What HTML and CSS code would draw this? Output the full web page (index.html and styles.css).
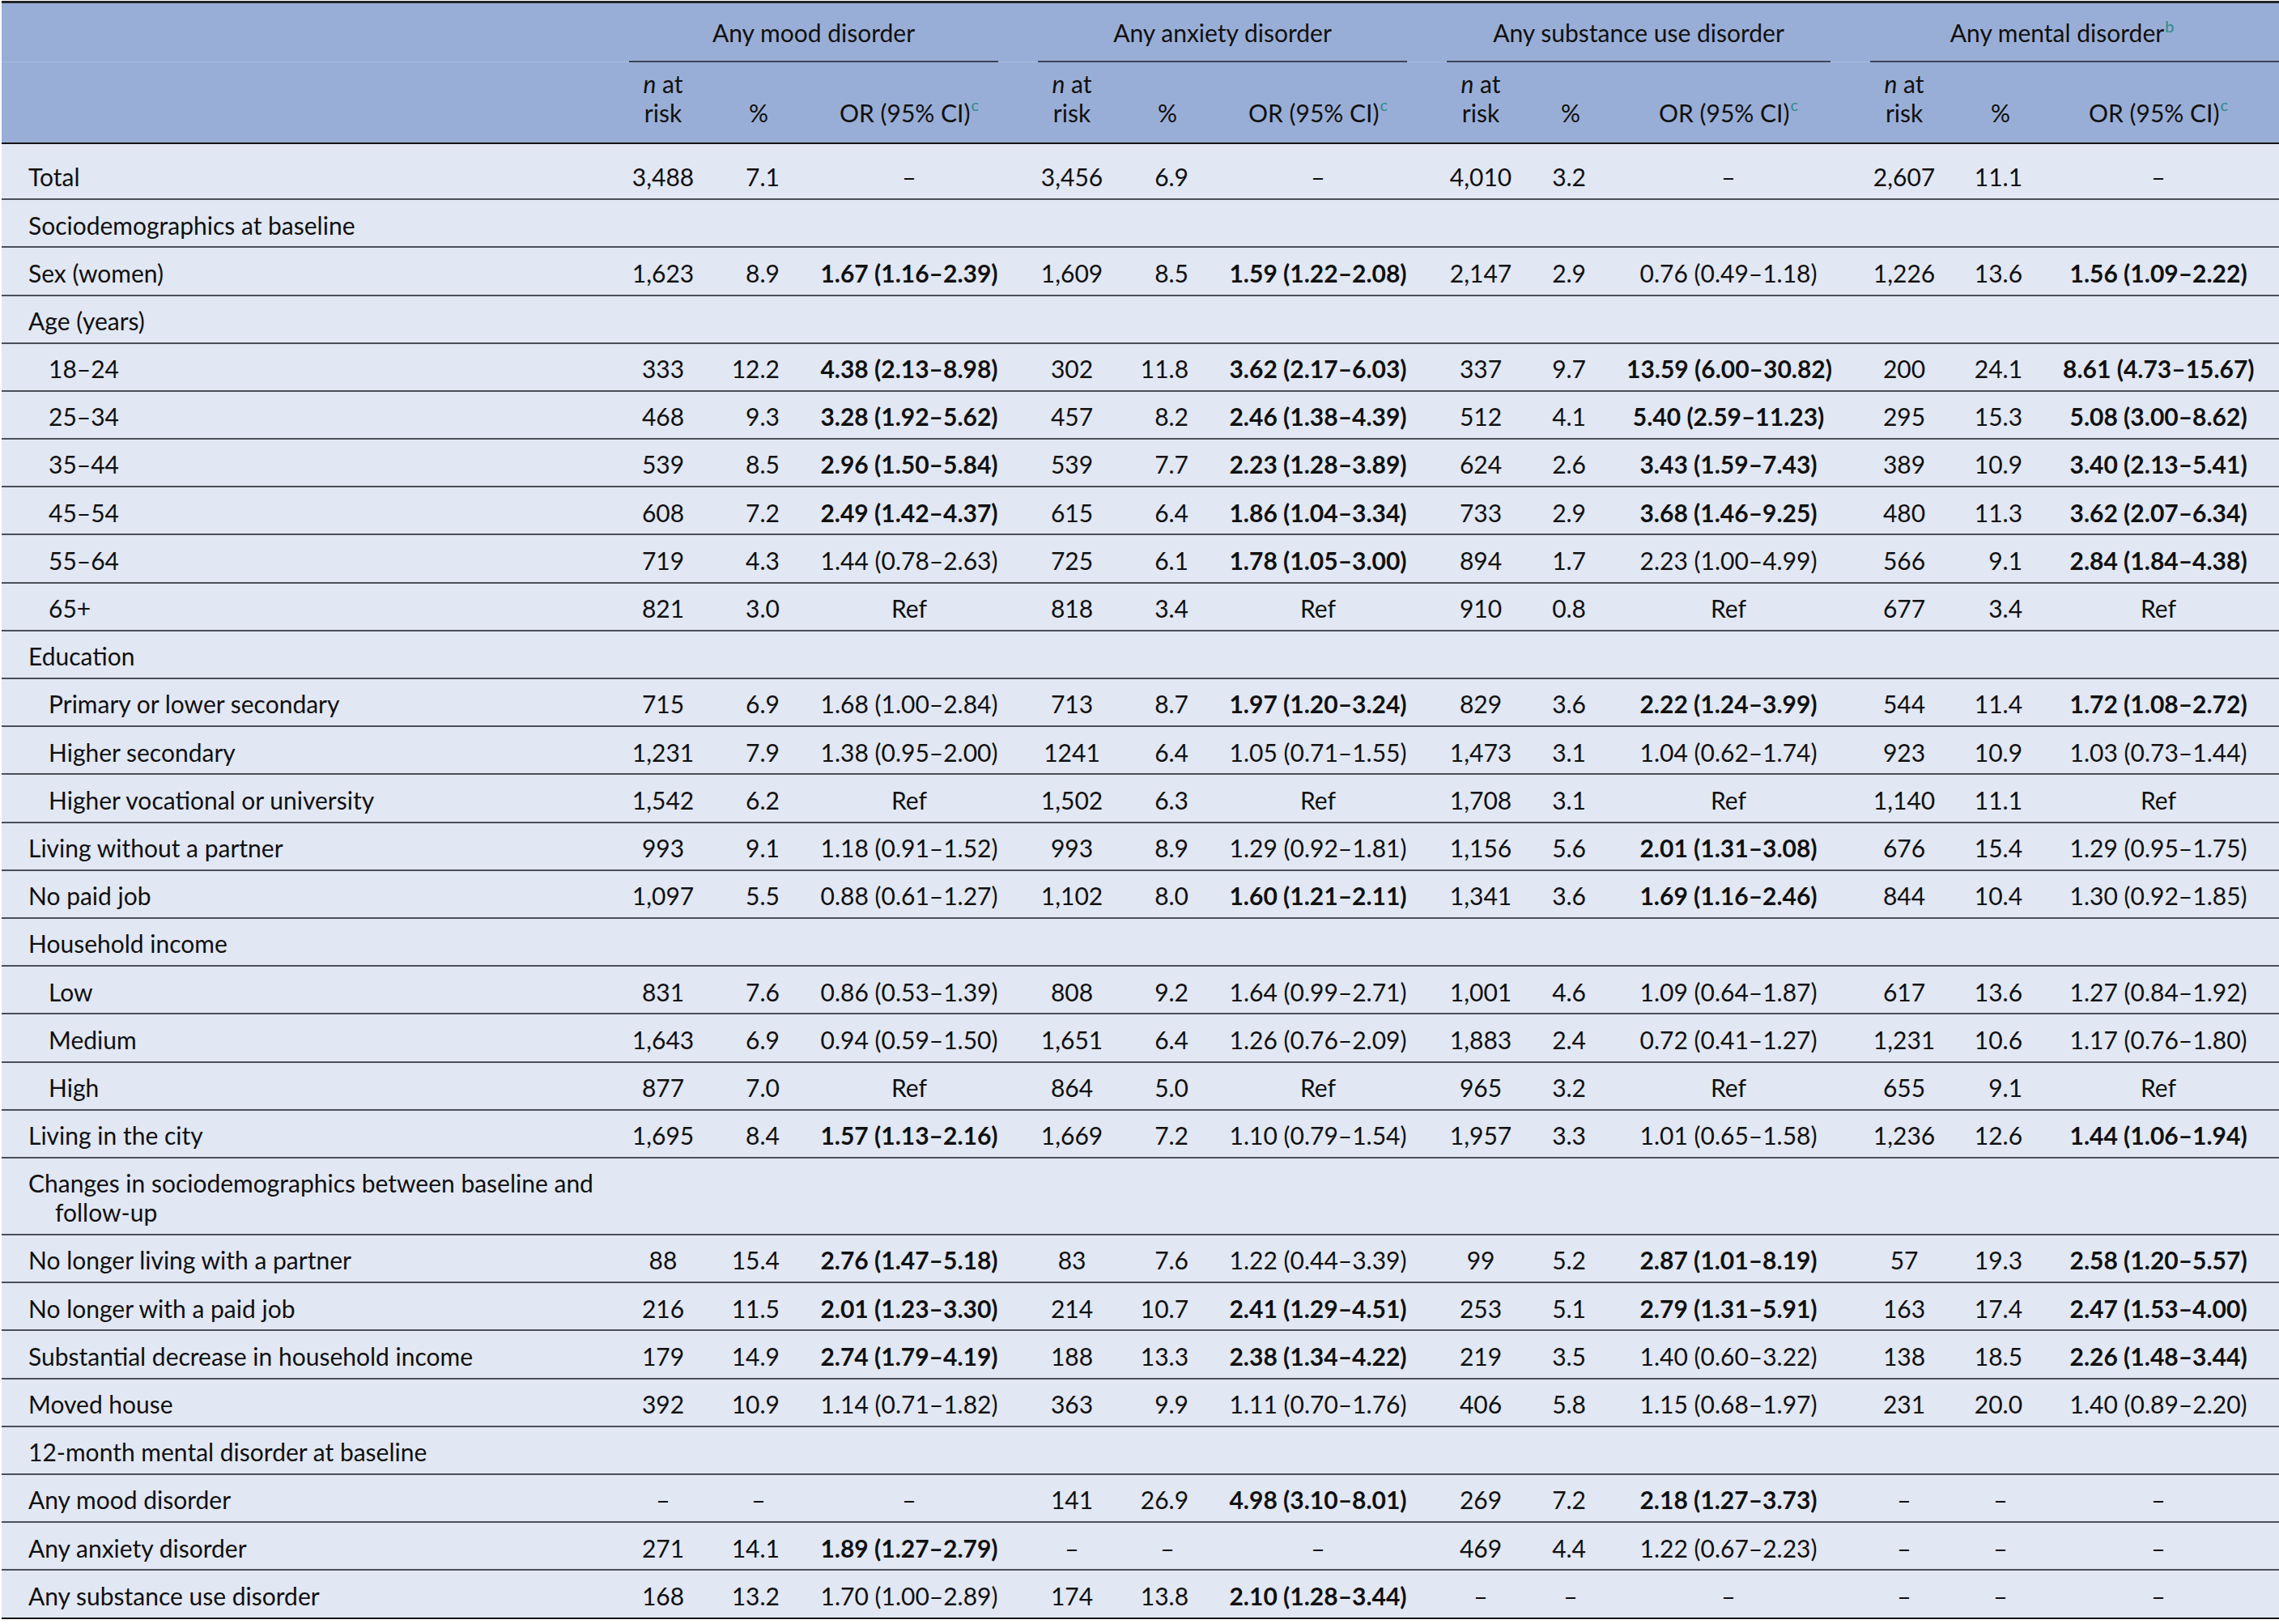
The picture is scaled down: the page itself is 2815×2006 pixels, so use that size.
FILE: index.html
```html
<!DOCTYPE html>
<html lang="en">
<head>
<meta charset="utf-8">
<title>Table</title>
<link rel="stylesheet" href="styles.css">
</head>
<body>
<table class="tbl">
  <colgroup>
    <col class="w-lab">
    <col class="w-n"><col class="w-pc"><col class="w-or"><col class="w-sp">
    <col class="w-n"><col class="w-pc"><col class="w-or"><col class="w-sp">
    <col class="w-n"><col class="w-pc3"><col class="w-or3"><col class="w-sp">
    <col class="w-n"><col class="w-pc4"><col class="w-or4">
  </colgroup>
  <thead>
    <tr class="hr1">
      <th class="blank"></th>
      <th class="grp" colspan="3">Any mood disorder</th>
      <th class="blank"></th>
      <th class="grp" colspan="3">Any anxiety disorder</th>
      <th class="blank"></th>
      <th class="grp" colspan="3">Any substance use disorder</th>
      <th class="blank"></th>
      <th class="grp last" colspan="3">Any mental disorder<sup>b</sup></th>
    </tr>
    <tr class="hr2">
      <th></th>
      <th class="n"><i>n</i> at<br>risk</th><th class="pch">%</th><th class="or">OR (95% CI)<sup>c</sup></th><th></th>
      <th class="n"><i>n</i> at<br>risk</th><th class="pch">%</th><th class="or">OR (95% CI)<sup>c</sup></th><th></th>
      <th class="n"><i>n</i> at<br>risk</th><th class="pch">%</th><th class="or">OR (95% CI)<sup>c</sup></th><th></th>
      <th class="n"><i>n</i> at<br>risk</th><th class="pch">%</th><th class="or last">OR (95% CI)<sup>c</sup></th>
    </tr>
  </thead>
  <tbody>
    <tr class="first">
      <td class="lab">Total</td>
      <td class="n">3,488</td><td class="pc">7.1</td><td class="or">–</td><td></td>
      <td class="n">3,456</td><td class="pc">6.9</td><td class="or">–</td><td></td>
      <td class="n">4,010</td><td class="pc">3.2</td><td class="or">–</td><td></td>
      <td class="n">2,607</td><td class="pc">11.1</td><td class="or last">–</td>
    </tr>
    <tr class="sec">
      <td class="lab">Sociodemographics at baseline</td><td colspan="15"></td>
    </tr>
    <tr>
      <td class="lab">Sex (women)</td>
      <td class="n">1,623</td><td class="pc">8.9</td><td class="or"><b>1.67 (1.16–2.39)</b></td><td></td>
      <td class="n">1,609</td><td class="pc">8.5</td><td class="or"><b>1.59 (1.22–2.08)</b></td><td></td>
      <td class="n">2,147</td><td class="pc">2.9</td><td class="or">0.76 (0.49–1.18)</td><td></td>
      <td class="n">1,226</td><td class="pc">13.6</td><td class="or last"><b>1.56 (1.09–2.22)</b></td>
    </tr>
    <tr class="sec">
      <td class="lab">Age (years)</td><td colspan="15"></td>
    </tr>
    <tr>
      <td class="lab ind">18–24</td>
      <td class="n">333</td><td class="pc">12.2</td><td class="or"><b>4.38 (2.13–8.98)</b></td><td></td>
      <td class="n">302</td><td class="pc">11.8</td><td class="or"><b>3.62 (2.17–6.03)</b></td><td></td>
      <td class="n">337</td><td class="pc">9.7</td><td class="or"><b>13.59 (6.00–30.82)</b></td><td></td>
      <td class="n">200</td><td class="pc">24.1</td><td class="or last"><b>8.61 (4.73–15.67)</b></td>
    </tr>
    <tr>
      <td class="lab ind">25–34</td>
      <td class="n">468</td><td class="pc">9.3</td><td class="or"><b>3.28 (1.92–5.62)</b></td><td></td>
      <td class="n">457</td><td class="pc">8.2</td><td class="or"><b>2.46 (1.38–4.39)</b></td><td></td>
      <td class="n">512</td><td class="pc">4.1</td><td class="or"><b>5.40 (2.59–11.23)</b></td><td></td>
      <td class="n">295</td><td class="pc">15.3</td><td class="or last"><b>5.08 (3.00–8.62)</b></td>
    </tr>
    <tr>
      <td class="lab ind">35–44</td>
      <td class="n">539</td><td class="pc">8.5</td><td class="or"><b>2.96 (1.50–5.84)</b></td><td></td>
      <td class="n">539</td><td class="pc">7.7</td><td class="or"><b>2.23 (1.28–3.89)</b></td><td></td>
      <td class="n">624</td><td class="pc">2.6</td><td class="or"><b>3.43 (1.59–7.43)</b></td><td></td>
      <td class="n">389</td><td class="pc">10.9</td><td class="or last"><b>3.40 (2.13–5.41)</b></td>
    </tr>
    <tr>
      <td class="lab ind">45–54</td>
      <td class="n">608</td><td class="pc">7.2</td><td class="or"><b>2.49 (1.42–4.37)</b></td><td></td>
      <td class="n">615</td><td class="pc">6.4</td><td class="or"><b>1.86 (1.04–3.34)</b></td><td></td>
      <td class="n">733</td><td class="pc">2.9</td><td class="or"><b>3.68 (1.46–9.25)</b></td><td></td>
      <td class="n">480</td><td class="pc">11.3</td><td class="or last"><b>3.62 (2.07–6.34)</b></td>
    </tr>
    <tr>
      <td class="lab ind">55–64</td>
      <td class="n">719</td><td class="pc">4.3</td><td class="or">1.44 (0.78–2.63)</td><td></td>
      <td class="n">725</td><td class="pc">6.1</td><td class="or"><b>1.78 (1.05–3.00)</b></td><td></td>
      <td class="n">894</td><td class="pc">1.7</td><td class="or">2.23 (1.00–4.99)</td><td></td>
      <td class="n">566</td><td class="pc">9.1</td><td class="or last"><b>2.84 (1.84–4.38)</b></td>
    </tr>
    <tr>
      <td class="lab ind">65+</td>
      <td class="n">821</td><td class="pc">3.0</td><td class="or">Ref</td><td></td>
      <td class="n">818</td><td class="pc">3.4</td><td class="or">Ref</td><td></td>
      <td class="n">910</td><td class="pc">0.8</td><td class="or">Ref</td><td></td>
      <td class="n">677</td><td class="pc">3.4</td><td class="or last">Ref</td>
    </tr>
    <tr class="sec">
      <td class="lab">Education</td><td colspan="15"></td>
    </tr>
    <tr>
      <td class="lab ind">Primary or lower secondary</td>
      <td class="n">715</td><td class="pc">6.9</td><td class="or">1.68 (1.00–2.84)</td><td></td>
      <td class="n">713</td><td class="pc">8.7</td><td class="or"><b>1.97 (1.20–3.24)</b></td><td></td>
      <td class="n">829</td><td class="pc">3.6</td><td class="or"><b>2.22 (1.24–3.99)</b></td><td></td>
      <td class="n">544</td><td class="pc">11.4</td><td class="or last"><b>1.72 (1.08–2.72)</b></td>
    </tr>
    <tr>
      <td class="lab ind">Higher secondary</td>
      <td class="n">1,231</td><td class="pc">7.9</td><td class="or">1.38 (0.95–2.00)</td><td></td>
      <td class="n">1241</td><td class="pc">6.4</td><td class="or">1.05 (0.71–1.55)</td><td></td>
      <td class="n">1,473</td><td class="pc">3.1</td><td class="or">1.04 (0.62–1.74)</td><td></td>
      <td class="n">923</td><td class="pc">10.9</td><td class="or last">1.03 (0.73–1.44)</td>
    </tr>
    <tr>
      <td class="lab ind">Higher vocational or university</td>
      <td class="n">1,542</td><td class="pc">6.2</td><td class="or">Ref</td><td></td>
      <td class="n">1,502</td><td class="pc">6.3</td><td class="or">Ref</td><td></td>
      <td class="n">1,708</td><td class="pc">3.1</td><td class="or">Ref</td><td></td>
      <td class="n">1,140</td><td class="pc">11.1</td><td class="or last">Ref</td>
    </tr>
    <tr>
      <td class="lab">Living without a partner</td>
      <td class="n">993</td><td class="pc">9.1</td><td class="or">1.18 (0.91–1.52)</td><td></td>
      <td class="n">993</td><td class="pc">8.9</td><td class="or">1.29 (0.92–1.81)</td><td></td>
      <td class="n">1,156</td><td class="pc">5.6</td><td class="or"><b>2.01 (1.31–3.08)</b></td><td></td>
      <td class="n">676</td><td class="pc">15.4</td><td class="or last">1.29 (0.95–1.75)</td>
    </tr>
    <tr>
      <td class="lab">No paid job</td>
      <td class="n">1,097</td><td class="pc">5.5</td><td class="or">0.88 (0.61–1.27)</td><td></td>
      <td class="n">1,102</td><td class="pc">8.0</td><td class="or"><b>1.60 (1.21–2.11)</b></td><td></td>
      <td class="n">1,341</td><td class="pc">3.6</td><td class="or"><b>1.69 (1.16–2.46)</b></td><td></td>
      <td class="n">844</td><td class="pc">10.4</td><td class="or last">1.30 (0.92–1.85)</td>
    </tr>
    <tr class="sec">
      <td class="lab">Household income</td><td colspan="15"></td>
    </tr>
    <tr>
      <td class="lab ind">Low</td>
      <td class="n">831</td><td class="pc">7.6</td><td class="or">0.86 (0.53–1.39)</td><td></td>
      <td class="n">808</td><td class="pc">9.2</td><td class="or">1.64 (0.99–2.71)</td><td></td>
      <td class="n">1,001</td><td class="pc">4.6</td><td class="or">1.09 (0.64–1.87)</td><td></td>
      <td class="n">617</td><td class="pc">13.6</td><td class="or last">1.27 (0.84–1.92)</td>
    </tr>
    <tr>
      <td class="lab ind">Medium</td>
      <td class="n">1,643</td><td class="pc">6.9</td><td class="or">0.94 (0.59–1.50)</td><td></td>
      <td class="n">1,651</td><td class="pc">6.4</td><td class="or">1.26 (0.76–2.09)</td><td></td>
      <td class="n">1,883</td><td class="pc">2.4</td><td class="or">0.72 (0.41–1.27)</td><td></td>
      <td class="n">1,231</td><td class="pc">10.6</td><td class="or last">1.17 (0.76–1.80)</td>
    </tr>
    <tr>
      <td class="lab ind">High</td>
      <td class="n">877</td><td class="pc">7.0</td><td class="or">Ref</td><td></td>
      <td class="n">864</td><td class="pc">5.0</td><td class="or">Ref</td><td></td>
      <td class="n">965</td><td class="pc">3.2</td><td class="or">Ref</td><td></td>
      <td class="n">655</td><td class="pc">9.1</td><td class="or last">Ref</td>
    </tr>
    <tr>
      <td class="lab">Living in the city</td>
      <td class="n">1,695</td><td class="pc">8.4</td><td class="or"><b>1.57 (1.13–2.16)</b></td><td></td>
      <td class="n">1,669</td><td class="pc">7.2</td><td class="or">1.10 (0.79–1.54)</td><td></td>
      <td class="n">1,957</td><td class="pc">3.3</td><td class="or">1.01 (0.65–1.58)</td><td></td>
      <td class="n">1,236</td><td class="pc">12.6</td><td class="or last"><b>1.44 (1.06–1.94)</b></td>
    </tr>
    <tr class="sec">
      <td class="lab hang">Changes in sociodemographics between baseline and<br>follow-up</td><td colspan="15"></td>
    </tr>
    <tr>
      <td class="lab">No longer living with a partner</td>
      <td class="n">88</td><td class="pc">15.4</td><td class="or"><b>2.76 (1.47–5.18)</b></td><td></td>
      <td class="n">83</td><td class="pc">7.6</td><td class="or">1.22 (0.44–3.39)</td><td></td>
      <td class="n">99</td><td class="pc">5.2</td><td class="or"><b>2.87 (1.01–8.19)</b></td><td></td>
      <td class="n">57</td><td class="pc">19.3</td><td class="or last"><b>2.58 (1.20–5.57)</b></td>
    </tr>
    <tr>
      <td class="lab">No longer with a paid job</td>
      <td class="n">216</td><td class="pc">11.5</td><td class="or"><b>2.01 (1.23–3.30)</b></td><td></td>
      <td class="n">214</td><td class="pc">10.7</td><td class="or"><b>2.41 (1.29–4.51)</b></td><td></td>
      <td class="n">253</td><td class="pc">5.1</td><td class="or"><b>2.79 (1.31–5.91)</b></td><td></td>
      <td class="n">163</td><td class="pc">17.4</td><td class="or last"><b>2.47 (1.53–4.00)</b></td>
    </tr>
    <tr>
      <td class="lab">Substantial decrease in household income</td>
      <td class="n">179</td><td class="pc">14.9</td><td class="or"><b>2.74 (1.79–4.19)</b></td><td></td>
      <td class="n">188</td><td class="pc">13.3</td><td class="or"><b>2.38 (1.34–4.22)</b></td><td></td>
      <td class="n">219</td><td class="pc">3.5</td><td class="or">1.40 (0.60–3.22)</td><td></td>
      <td class="n">138</td><td class="pc">18.5</td><td class="or last"><b>2.26 (1.48–3.44)</b></td>
    </tr>
    <tr>
      <td class="lab">Moved house</td>
      <td class="n">392</td><td class="pc">10.9</td><td class="or">1.14 (0.71–1.82)</td><td></td>
      <td class="n">363</td><td class="pc">9.9</td><td class="or">1.11 (0.70–1.76)</td><td></td>
      <td class="n">406</td><td class="pc">5.8</td><td class="or">1.15 (0.68–1.97)</td><td></td>
      <td class="n">231</td><td class="pc">20.0</td><td class="or last">1.40 (0.89–2.20)</td>
    </tr>
    <tr class="sec">
      <td class="lab">12-month mental disorder at baseline</td><td colspan="15"></td>
    </tr>
    <tr>
      <td class="lab">Any mood disorder</td>
      <td class="n">–</td><td class="pc dash">–</td><td class="or">–</td><td></td>
      <td class="n">141</td><td class="pc">26.9</td><td class="or"><b>4.98 (3.10–8.01)</b></td><td></td>
      <td class="n">269</td><td class="pc">7.2</td><td class="or"><b>2.18 (1.27–3.73)</b></td><td></td>
      <td class="n">–</td><td class="pc dash">–</td><td class="or last">–</td>
    </tr>
    <tr>
      <td class="lab">Any anxiety disorder</td>
      <td class="n">271</td><td class="pc">14.1</td><td class="or"><b>1.89 (1.27–2.79)</b></td><td></td>
      <td class="n">–</td><td class="pc dash">–</td><td class="or">–</td><td></td>
      <td class="n">469</td><td class="pc">4.4</td><td class="or">1.22 (0.67–2.23)</td><td></td>
      <td class="n">–</td><td class="pc dash">–</td><td class="or last">–</td>
    </tr>
    <tr class="final">
      <td class="lab">Any substance use disorder</td>
      <td class="n">168</td><td class="pc">13.2</td><td class="or">1.70 (1.00–2.89)</td><td></td>
      <td class="n">174</td><td class="pc">13.8</td><td class="or"><b>2.10 (1.28–3.44)</b></td><td></td>
      <td class="n">–</td><td class="pc dash">–</td><td class="or">–</td><td></td>
      <td class="n">–</td><td class="pc dash">–</td><td class="or last">–</td>
    </tr>
  </tbody>
</table>
</body>
</html>
```

FILE: styles.css
```css
* {
  box-sizing: border-box;
}

html,
body {
  margin: 0;
  background: #ffffff;
}

body {
  padding: 1px 0 0 2px;
  font-family: "Lato", "Open Sans", "Liberation Sans", sans-serif;
  font-size: 30px;
  line-height: 36px;
  color: #101010;
}

.tbl {
  width: 2813px;
  table-layout: fixed;
  border-collapse: separate;
  border-spacing: 0;
  border-top: 3px solid #222326;
}

.w-lab { width: 775px; }
.w-n { width: 84px; }
.w-pc { width: 152px; }
.w-pc3 { width: 138px; }
.w-pc4 { width: 154px; }
.w-or { width: 220px; }
.w-or3 { width: 252px; }
.w-or4 { width: 267px; }
.w-sp { width: 49px; }

th,
td {
  padding: 0;
  font-weight: 400;
  white-space: nowrap;
}

thead th {
  background: #99aed6;
}

tbody td {
  background: #e1e7f3;
}

/* header row 1: group titles */
.hr1 th {
  padding: 17.6px 0 17.4px;
  text-align: center;
  vertical-align: top;
}

.hr1 .grp {
  border-bottom: 2px solid #3a4658;
}

.hr1 .blank {
  border-bottom: 1px solid #a9bce0;
}

.hr1 .grp.last {
  padding-right: 31px;
}

/* header row 2: column titles */
.hr2 th {
  padding: 8.4px 0 18.6px;
  vertical-align: bottom;
  text-align: center;
  border-bottom: 2px solid #151515;
}

.hr2 .or.last {
  padding-right: 31px;
}

sup {
  font-size: 20px;
  line-height: 0;
  vertical-align: 14px;
  color: #2c8c88;
  margin-left: 1px;
}

.hr1 sup {
  vertical-align: 12px;
}

/* body */
tbody td {
  padding: 12.4px 0 8.8px;
  border-bottom: 2px solid #4a4f58;
  vertical-align: top;
}

tbody tr.first td {
  padding-top: 22.4px;
}

tbody tr.final td {
  border-bottom-color: #151515;
}

td.lab {
  padding-left: 33px;
}

td.lab.ind {
  padding-left: 58px;
}

td.lab.hang {
  padding-left: 66px;
  text-indent: -33px;
}

td.n {
  text-align: center;
}

td.pc {
  text-align: right;
  padding-right: 50px;
}

td.pc.dash {
  text-align: center;
  padding-right: 0;
}

td.or {
  text-align: center;
}

td.or.last {
  padding-right: 31px;
}

b {
  font-weight: 700;
}

i {
  font-style: italic;
}
```
